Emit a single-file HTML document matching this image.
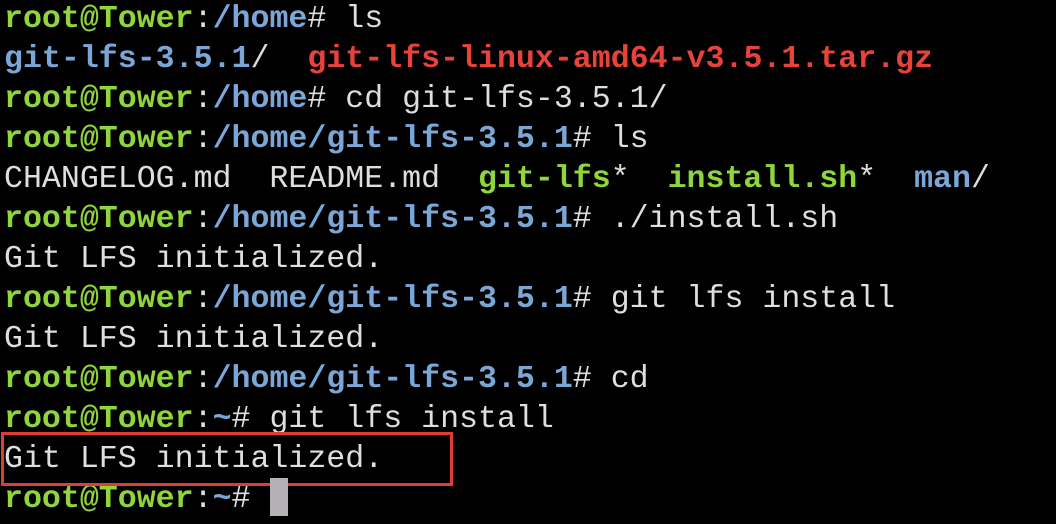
<!DOCTYPE html>
<html><head><meta charset="utf-8"><style>
html,body{margin:0;padding:0;background:#000;width:1056px;height:524px;overflow:hidden;}
.t{position:absolute;left:4px;top:0px;font-family:"Liberation Mono",monospace;font-size:31.6px;line-height:40px;color:#dedede;white-space:pre;}
.g{color:#8ed63c;font-weight:bold}
.b{color:#7ba7d8;font-weight:bold}
.bn{color:#7ba7d8;font-weight:bold}
.r{color:#e8433a;font-weight:bold}
.box{position:absolute;left:1px;top:432px;width:446px;height:48px;border:3px solid #e03c36;}
.cur{position:absolute;left:270px;top:478px;width:18px;height:38px;background:#b4b0b6;}
</style></head><body>
<div class="t"><span class="g">root@Tower</span>:<span class="bn">/home</span># ls
<span class="b">git-lfs-3.5.1</span>/  <span class="r">git-lfs-linux-amd64-v3.5.1.tar.gz</span>
<span class="g">root@Tower</span>:<span class="bn">/home</span># cd git-lfs-3.5.1/
<span class="g">root@Tower</span>:<span class="bn">/home/git-lfs-3.5.1</span># ls
CHANGELOG.md  README.md  <span class="g">git-lfs</span>*  <span class="g">install.sh</span>*  <span class="b">man</span>/
<span class="g">root@Tower</span>:<span class="bn">/home/git-lfs-3.5.1</span># ./install.sh
Git LFS initialized.
<span class="g">root@Tower</span>:<span class="bn">/home/git-lfs-3.5.1</span># git lfs install
Git LFS initialized.
<span class="g">root@Tower</span>:<span class="bn">/home/git-lfs-3.5.1</span># cd
<span class="g">root@Tower</span>:<span class="bn">~</span># git lfs install
Git LFS initialized.
<span class="g">root@Tower</span>:<span class="bn">~</span># </div>
<div class="box"></div>
<div class="cur"></div>
</body></html>
